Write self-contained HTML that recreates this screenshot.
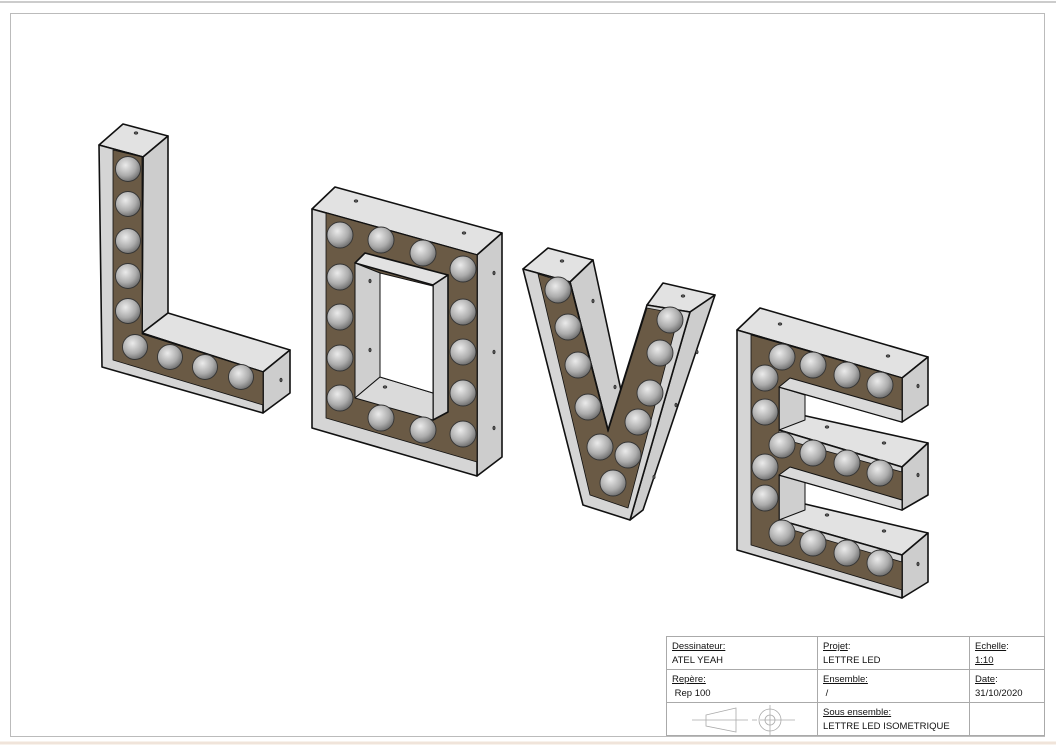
<!DOCTYPE html>
<html><head><meta charset="utf-8"><style>
html,body{margin:0;padding:0;background:#fff;width:1056px;height:745px;overflow:hidden}
svg{position:absolute;left:0;top:0}
.tb{position:absolute;left:666px;top:636px;border-collapse:collapse;font-family:"Liberation Sans",sans-serif;font-size:9.5px;color:#111}
.tb td{border:1.5px solid #aaa;vertical-align:top;padding:3px 5px 0 5px;height:29px;line-height:14px}
.u{text-decoration:underline}
</style></head><body>
<svg width="1056" height="745" viewBox="0 0 1056 745">
<defs>
<radialGradient id="b" cx="0.4" cy="0.35" r="0.7">
<stop offset="0" stop-color="#ebebeb"/><stop offset="0.6" stop-color="#acacac"/><stop offset="1" stop-color="#666"/>
</radialGradient>
</defs>
<line x1="0" y1="2" x2="1056" y2="2" stroke="#ccc" stroke-width="2"/>
<rect x="10.5" y="13.5" width="1034" height="723" fill="none" stroke="#bbb" stroke-width="1"/>
<line x1="0" y1="743" x2="1056" y2="743" stroke="#f0e4da" stroke-width="3"/>
<g stroke="#111" stroke-width="1.6" stroke-linejoin="round">
<!-- L -->
<polygon points="99,145 123,124 168,136 143,157" fill="#e2e2e2"/>
<polygon points="143,157 168,136 168,313 142,333" fill="#cdcdcd"/>
<polygon points="142,333 168,313 290,350 263,372" fill="#e2e2e2"/>
<polygon points="263,372 290,350 290,393 263,413" fill="#cdcdcd"/>
<polygon points="99,145 143,157 142,333 263,372 263,413 102,367" fill="#d5d5d5"/>
<polygon points="113,150 142,157 142,334 263,372 263,405 113,360" fill="#6a5a45" stroke-width="0.8"/>
<!-- O -->
<polygon points="312,209 335,187 502,233 477,255" fill="#e2e2e2"/>
<polygon points="477,255 502,233 502,457 477,476" fill="#cdcdcd"/>
<polygon points="312,209 477,255 477,476 312,428" fill="#d5d5d5"/>
<polygon points="326,213 477,255 477,462 326,418" fill="#6a5a45" stroke-width="0.8"/>
<polygon points="355,263 365,253 448,275 433,285" fill="#e2e2e2"/>
<polygon points="433,285 448,275 448,412 433,420" fill="#cdcdcd"/>
<polygon points="355,263 380,273 380,377 355,398" fill="#cfcfcf" stroke-width="1"/>
<polygon points="355,398 380,377 433,393 433,420" fill="#dadada" stroke-width="1"/>
<polygon points="380,273 433,286 433,393 380,377" fill="#fff" stroke-width="1"/>
<!-- V -->
<polygon points="523,269 548,248 593,260 570,282" fill="#e2e2e2"/>
<polygon points="570,282 593,260 622,395 608,430" fill="#cdcdcd"/>
<polygon points="647,305 663,283 715,295 690,312" fill="#e2e2e2"/>
<polygon points="690,312 715,295 643,510 630,520" fill="#cdcdcd"/>
<polygon points="523,269 570,282 608,430 647,305 690,312 630,520 583,505" fill="#d5d5d5"/>
<polygon points="538,274 570,284 608,432 647,308 679,314 628,508 590,495" fill="#6a5a45" stroke-width="0.8"/>
<!-- E -->
<polygon points="737,330 760,308 928,357 902,378" fill="#e2e2e2"/>
<polygon points="902,378 928,357 928,405 902,422" fill="#cdcdcd"/>
<polygon points="779,430 788,412 928,443 902,467" fill="#e2e2e2"/>
<polygon points="902,467 928,443 928,495 902,510" fill="#cdcdcd"/>
<polygon points="779,520 788,500 928,533 902,555" fill="#e2e2e2"/>
<polygon points="902,555 928,533 928,582 902,598" fill="#cdcdcd"/>
<polygon points="779,387 805,395 805,420 779,430" fill="#cfcfcf" stroke-width="1"/>
<polygon points="779,475 805,482 805,510 779,520" fill="#cfcfcf" stroke-width="1"/>
<polygon points="737,330 902,378 902,422 779,387 779,430 902,467 902,510 779,475 779,520 902,555 902,598 737,550" fill="#d5d5d5"/>
<polygon points="751,335 902,378 902,412 790,380 779,387 779,438 902,472 902,503 790,470 779,475 779,526 902,562 902,590 751,545" fill="#6a5a45" stroke-width="0.8"/>
<polygon points="779,387 790,378 902,410 902,422" fill="#dadada" stroke-width="1"/>
<polygon points="779,475 790,467 902,500 902,510" fill="#dadada" stroke-width="1"/>
</g>
<g fill="url(#b)" stroke="#333" stroke-width="0.9">
<circle cx="128" cy="169" r="12.5"/><circle cx="128" cy="204" r="12.5"/><circle cx="128" cy="241" r="12.5"/><circle cx="128" cy="276" r="12.5"/><circle cx="128" cy="311" r="12.5"/>
<circle cx="135" cy="347" r="12.5"/><circle cx="170" cy="357" r="12.5"/><circle cx="205" cy="367" r="12.5"/><circle cx="241" cy="377" r="12.5"/>
<circle cx="340" cy="235" r="13"/><circle cx="381" cy="240" r="13"/><circle cx="423" cy="253" r="13"/><circle cx="463" cy="269" r="13"/>
<circle cx="340" cy="277" r="13"/><circle cx="340" cy="317" r="13"/><circle cx="340" cy="358" r="13"/><circle cx="340" cy="398" r="13"/>
<circle cx="381" cy="418" r="13"/><circle cx="423" cy="430" r="13"/>
<circle cx="463" cy="312" r="13"/><circle cx="463" cy="352" r="13"/><circle cx="463" cy="393" r="13"/><circle cx="463" cy="434" r="13"/>
<circle cx="558" cy="290" r="13"/><circle cx="568" cy="327" r="13"/><circle cx="578" cy="365" r="13"/><circle cx="588" cy="407" r="13"/><circle cx="600" cy="447" r="13"/><circle cx="613" cy="483" r="13"/>
<circle cx="628" cy="455" r="13"/><circle cx="638" cy="422" r="13"/><circle cx="650" cy="393" r="13"/><circle cx="660" cy="353" r="13"/><circle cx="670" cy="320" r="13"/>
<circle cx="782" cy="357" r="13"/><circle cx="813" cy="365" r="13"/><circle cx="847" cy="375" r="13"/><circle cx="880" cy="385" r="13"/>
<circle cx="765" cy="378" r="13"/><circle cx="765" cy="412" r="13"/>
<circle cx="782" cy="445" r="13"/><circle cx="813" cy="453" r="13"/><circle cx="847" cy="463" r="13"/><circle cx="880" cy="473" r="13"/>
<circle cx="765" cy="467" r="13"/><circle cx="765" cy="498" r="13"/>
<circle cx="782" cy="533" r="13"/><circle cx="813" cy="543" r="13"/><circle cx="847" cy="553" r="13"/><circle cx="880" cy="563" r="13"/>
</g>
<g fill="#555" stroke="#111" stroke-width="0.5">
<ellipse cx="136" cy="133" rx="2" ry="1.3"/><ellipse cx="281" cy="380" rx="1.2" ry="2"/>
<ellipse cx="356" cy="201" rx="2" ry="1.3"/><ellipse cx="464" cy="233" rx="2" ry="1.3"/><ellipse cx="494" cy="273" rx="1.2" ry="2"/><ellipse cx="494" cy="352" rx="1.2" ry="2"/><ellipse cx="494" cy="428" rx="1.2" ry="2"/><ellipse cx="370" cy="281" rx="1.2" ry="2"/><ellipse cx="370" cy="350" rx="1.2" ry="2"/><ellipse cx="385" cy="387" rx="2" ry="1.3"/>
<ellipse cx="562" cy="261" rx="2" ry="1.3"/><ellipse cx="593" cy="301" rx="1.2" ry="2"/><ellipse cx="615" cy="387" rx="1.2" ry="2"/><ellipse cx="683" cy="296" rx="2" ry="1.3"/><ellipse cx="697" cy="352" rx="1.2" ry="2"/><ellipse cx="676" cy="405" rx="1.2" ry="2"/><ellipse cx="654" cy="477" rx="1.2" ry="2"/>
<ellipse cx="780" cy="324" rx="2" ry="1.3"/><ellipse cx="888" cy="356" rx="2" ry="1.3"/><ellipse cx="918" cy="386" rx="1.2" ry="2"/><ellipse cx="827" cy="427" rx="2" ry="1.3"/><ellipse cx="884" cy="443" rx="2" ry="1.3"/><ellipse cx="918" cy="475" rx="1.2" ry="2"/><ellipse cx="827" cy="515" rx="2" ry="1.3"/><ellipse cx="884" cy="531" rx="2" ry="1.3"/><ellipse cx="918" cy="564" rx="1.2" ry="2"/>
</g>
<g stroke="#aaa" stroke-width="0.8" fill="none">
<line x1="692" y1="720" x2="748" y2="720"/><polygon points="706,715 736,708 736,732 706,726"/>
<line x1="752" y1="720" x2="757" y2="720"/><line x1="760" y1="720" x2="795" y2="720"/>
<circle cx="770" cy="720" r="11"/><circle cx="770" cy="720" r="5"/><line x1="770" y1="705" x2="770" y2="735"/>
</g>
</svg>
<table class="tb">
<tr><td style="width:140px"><span class="u">Dessinateur:</span><br>ATEL YEAH</td><td style="width:141px"><span class="u">Projet</span>:<br>LETTRE LED</td><td style="width:64px"><span class="u">Echelle</span>:<br><span class="u">1:10</span></td></tr>
<tr><td><span class="u">Repère:</span><br>&nbsp;Rep 100</td><td><span class="u">Ensemble:</span><br>&nbsp;/</td><td><span class="u">Date</span>:<br>31/10/2020</td></tr>
<tr><td></td><td><span class="u">Sous ensemble:</span><br>LETTRE LED ISOMETRIQUE</td><td></td></tr>
</table>
</body></html>
